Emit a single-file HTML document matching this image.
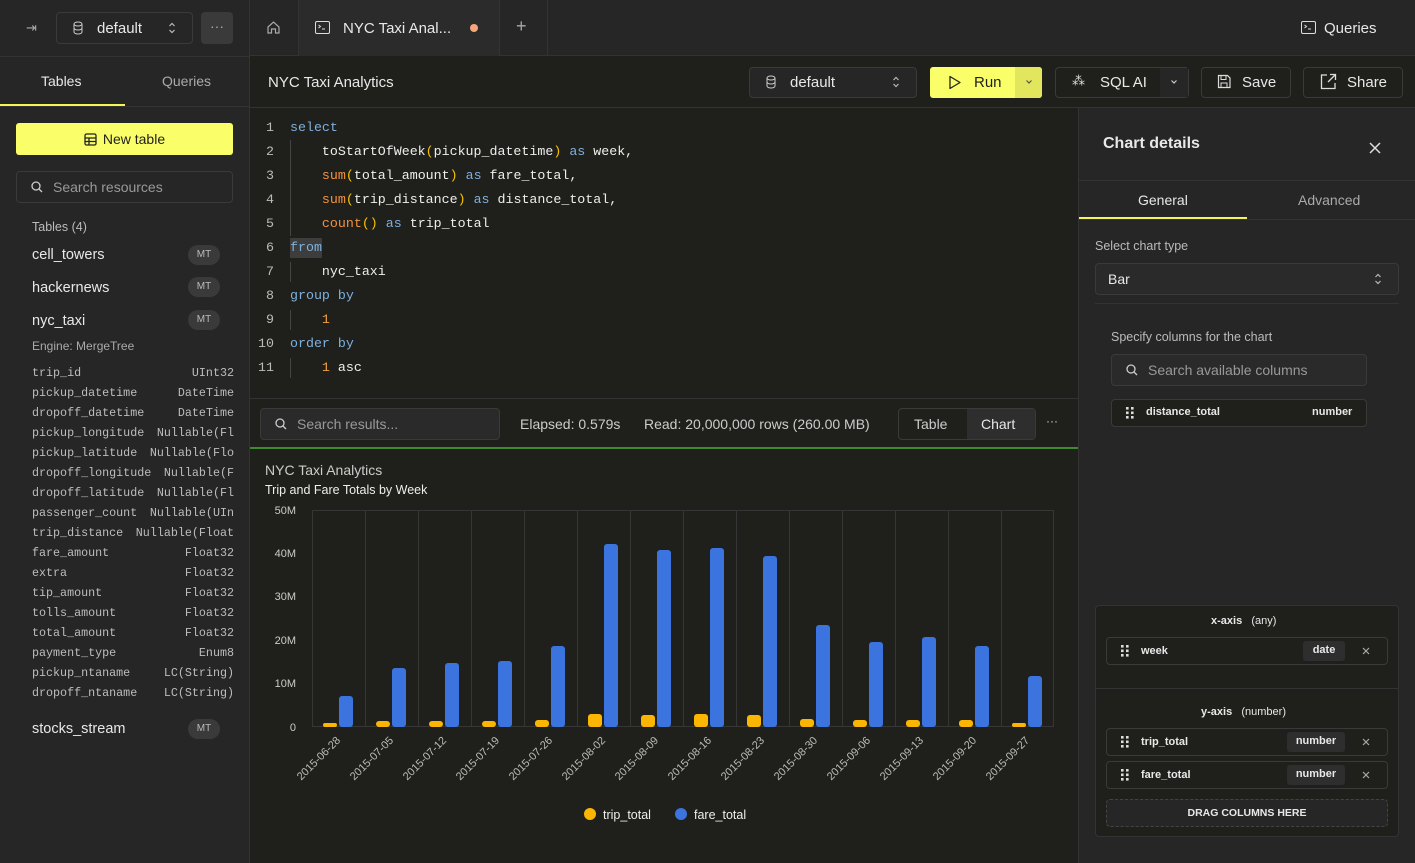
<!DOCTYPE html>
<html><head><meta charset="utf-8"><style>
*{box-sizing:border-box;margin:0;padding:0}
body{width:1415px;height:863px;background:#1f1f1c;font-family:"Liberation Sans",sans-serif;color:#e8e8e8;position:relative;overflow:hidden;font-size:14px}
.a{position:absolute}
.mono{font-family:"Liberation Mono","DejaVu Sans Mono",monospace}
.side{left:0;top:0;width:250px;height:863px;background:#262626;border-right:1px solid #333}
.btn{border:1px solid #3a3a3a;border-radius:4px;background:#1f1f1c}
.badge{background:#3a3a3a;border-radius:10px;color:#bbb;font-size:10px;width:32px;height:20px;line-height:20px;text-align:center}
.col{left:32px;width:202px;font-size:11.7px;color:#bdbdbd;height:20px;line-height:20px;display:flex;justify-content:space-between}
.code{left:290px;font-size:13.3px;color:#eee;height:24px;line-height:24px;white-space:pre}
.ln{left:254px;width:20px;text-align:right;font-size:13.3px;color:#bbb;height:24px;line-height:24px}
.k{color:#7fb0dc}.f{color:#f3923e}.p{color:#f5c400}.n{color:#f3a03e}
.rp{left:1078px;top:108px;width:337px;height:755px;background:#262626;border-left:1px solid #333}
.chip{border:1px solid #3a3a3a;border-radius:4px;background:#1f1f1c;height:28px;font-size:11px;font-weight:bold}
</style></head><body>
<svg width="0" height="0" style="position:absolute"><defs>
<symbol id="ud" viewBox="0 0 8 14"><path d="M1.5 5L4 2.5 6.5 5M1.5 9L4 11.5 6.5 9" fill="none" stroke="#bbb" stroke-width="1.2"/></symbol>
<symbol id="gr" viewBox="0 0 8 12"><g fill="#ddd"><rect x="0" y="0" width="2.6" height="2.6"/><rect x="5" y="0" width="2.6" height="2.6"/><rect x="0" y="4.5" width="2.6" height="2.6"/><rect x="5" y="4.5" width="2.6" height="2.6"/><rect x="0" y="9" width="2.6" height="2.6"/><rect x="5" y="9" width="2.6" height="2.6"/></g></symbol>
<symbol id="dn" viewBox="0 0 8 6"><path d="M1.5 1.5L4 4 6.5 1.5" fill="none" stroke="#555" stroke-width="1.2"/></symbol>
</defs></svg>
<!-- sidebar -->
<div class="a side"></div>
<div class="a" style="left:0;top:56px;width:250px;height:1px;background:#333"></div>
<div class="a" style="left:26px;top:20px;color:#aaa;font-size:13px">⇥</div>
<div class="a btn" style="left:56px;top:12px;width:137px;height:32px;background:#262626"></div>
<svg class="a" style="left:72px;top:21px" width="12" height="14" viewBox="0 0 12 14"><ellipse cx="6" cy="3" rx="4" ry="2" fill="none" stroke="#ccc"/><path d="M2 3v8c0 1.1 1.8 2 4 2s4-.9 4-2V3M2 7c0 1.1 1.8 2 4 2s4-.9 4-2" fill="none" stroke="#ccc"/></svg>
<div class="a" style="left:97px;top:20px;font-size:15px">default</div>
<svg class="a" style="left:168px;top:21px" width="8" height="14"><use href="#ud"/></svg>
<div class="a" style="left:201px;top:12px;width:32px;height:32px;background:#3a3a3a;border-radius:4px;color:#aaa;text-align:center;line-height:28px">···</div>
<div class="a" style="left:41px;top:73px;font-size:14px">Tables</div>
<div class="a" style="left:162px;top:73px;font-size:14px;color:#aaa">Queries</div>
<div class="a" style="left:0;top:104px;width:125px;height:2px;background:#f5f55a"></div>
<div class="a" style="left:0;top:106px;width:250px;height:1px;background:#333"></div>
<div class="a" style="left:16px;top:123px;width:217px;height:32px;background:#faff69;border-radius:3px;color:#1f1f1c;text-align:center;line-height:32px;font-size:14px">
<svg style="vertical-align:-2px;margin-right:6px" width="13" height="13" viewBox="0 0 13 13"><rect x="1" y="1" width="11" height="11" rx="1.5" fill="none" stroke="#222" stroke-width="1.3"/><path d="M1 5h11M1 8.5h11M5 5v7" stroke="#222" stroke-width="1.3"/></svg>New table</div>
<div class="a btn" style="left:16px;top:171px;width:217px;height:32px;background:#262626"></div>
<svg class="a" style="left:31px;top:181px" width="12" height="12"><circle cx="5" cy="5" r="4" fill="none" stroke="#ccc" stroke-width="1.3"/><path d="M8 8l3 3" stroke="#ccc" stroke-width="1.3"/></svg>
<div class="a" style="left:53px;top:179px;color:#999;font-size:14px">Search resources</div>
<div class="a" style="left:32px;top:220px;font-size:12.5px;color:#bbb">Tables (4)</div>
<div class="a" style="left:32px;top:247px;font-size:14.5px">cell_towers</div><div class="a badge" style="left:188px;top:245px">MT</div>
<div class="a" style="left:32px;top:280px;font-size:14.5px">hackernews</div><div class="a badge" style="left:188px;top:277px">MT</div>
<div class="a" style="left:32px;top:313px;font-size:14.5px">nyc_taxi</div><div class="a badge" style="left:188px;top:310px">MT</div>
<div class="a" style="left:32px;top:339px;font-size:12px;color:#aaa">Engine: MergeTree</div>
<div class="a mono col" style="top:363px"><span>trip_id</span><span>UInt32</span></div>
<div class="a mono col" style="top:383px"><span>pickup_datetime</span><span>DateTime</span></div>
<div class="a mono col" style="top:403px"><span>dropoff_datetime</span><span>DateTime</span></div>
<div class="a mono col" style="top:423px"><span>pickup_longitude</span><span>Nullable(Fl</span></div>
<div class="a mono col" style="top:443px"><span>pickup_latitude</span><span>Nullable(Flo</span></div>
<div class="a mono col" style="top:463px"><span>dropoff_longitude</span><span>Nullable(F</span></div>
<div class="a mono col" style="top:483px"><span>dropoff_latitude</span><span>Nullable(Fl</span></div>
<div class="a mono col" style="top:503px"><span>passenger_count</span><span>Nullable(UIn</span></div>
<div class="a mono col" style="top:523px"><span>trip_distance</span><span>Nullable(Float</span></div>
<div class="a mono col" style="top:543px"><span>fare_amount</span><span>Float32</span></div>
<div class="a mono col" style="top:563px"><span>extra</span><span>Float32</span></div>
<div class="a mono col" style="top:583px"><span>tip_amount</span><span>Float32</span></div>
<div class="a mono col" style="top:603px"><span>tolls_amount</span><span>Float32</span></div>
<div class="a mono col" style="top:623px"><span>total_amount</span><span>Float32</span></div>
<div class="a mono col" style="top:643px"><span>payment_type</span><span>Enum8</span></div>
<div class="a mono col" style="top:663px"><span>pickup_ntaname</span><span>LC(String)</span></div>
<div class="a mono col" style="top:683px"><span>dropoff_ntaname</span><span>LC(String)</span></div>
<div class="a" style="left:32px;top:721px;font-size:14.5px">stocks_stream</div><div class="a badge" style="left:188px;top:719px">MT</div>

<!-- top tab bar -->
<div class="a" style="left:250px;top:0;width:1165px;height:56px;background:#262626;border-bottom:1px solid #333"></div>
<div class="a" style="left:298px;top:0;width:1px;height:56px;background:#333"></div>
<svg class="a" style="left:266px;top:20px" width="15" height="15" viewBox="0 0 15 15"><path d="M2 7L7.5 2 13 7V13H9.5V9h-4v4H2z" fill="none" stroke="#aaa" stroke-width="1.2"/></svg>
<div class="a" style="left:299px;top:0;width:200px;height:56px;background:#2b2b2b"></div>
<svg class="a" style="left:315px;top:21px" width="15" height="13"><rect x=".5" y=".5" width="14" height="12" rx="1.5" fill="none" stroke="#ddd"/><path d="M3.5 4l2 1.5-2 1.5M7 8h3" fill="none" stroke="#ddd"/></svg>
<div class="a" style="left:343px;top:20px;font-size:15px">NYC Taxi Anal...</div>
<div class="a" style="left:470px;top:24px;width:8px;height:8px;border-radius:50%;background:#f6a57a"></div>
<div class="a" style="left:499px;top:0;width:1px;height:56px;background:#333"></div>
<div class="a" style="left:516px;top:16px;font-size:18px;color:#aaa">+</div>
<div class="a" style="left:547px;top:0;width:1px;height:56px;background:#333"></div>
<svg class="a" style="left:1301px;top:21px" width="15" height="13"><rect x=".5" y=".5" width="14" height="12" rx="1.5" fill="none" stroke="#ddd"/><path d="M3.5 4l2 1.5-2 1.5M7 8h3" fill="none" stroke="#ddd"/></svg>
<div class="a" style="left:1324px;top:20px;font-size:15px">Queries</div>

<!-- toolbar -->
<div class="a" style="left:250px;top:107px;width:1165px;height:1px;background:#333"></div>
<div class="a" style="left:268px;top:74px;font-size:15px">NYC Taxi Analytics</div>
<div class="a btn" style="left:749px;top:67px;width:168px;height:31px;background:#262626"></div>
<svg class="a" style="left:765px;top:75px" width="12" height="14" viewBox="0 0 12 14"><ellipse cx="6" cy="3" rx="4" ry="2" fill="none" stroke="#ccc"/><path d="M2 3v8c0 1.1 1.8 2 4 2s4-.9 4-2V3M2 7c0 1.1 1.8 2 4 2s4-.9 4-2" fill="none" stroke="#ccc"/></svg>
<div class="a" style="left:790px;top:74px;font-size:15px">default</div>
<svg class="a" style="left:892px;top:75px" width="8" height="14"><use href="#ud"/></svg>
<div class="a" style="left:930px;top:67px;width:112px;height:31px;background:#faff69;border-radius:3px"></div>
<div class="a" style="left:1015px;top:67px;width:27px;height:31px;background:#e2e65c;border-radius:0 3px 3px 0"></div>
<svg class="a" style="left:1025px;top:79px" width="8" height="6"><use href="#dn"/></svg>
<svg class="a" style="left:948px;top:75px" width="13" height="15"><path d="M2 1.5v12l10-6z" fill="none" stroke="#222" stroke-width="1.3" stroke-linejoin="round"/></svg>
<div class="a" style="left:974px;top:74px;font-size:15px;color:#1f1f1c">Run</div>
<div class="a btn" style="left:1055px;top:67px;width:134px;height:31px"></div>
<div class="a" style="left:1160px;top:68px;width:28px;height:29px;background:#262626"></div>
<svg class="a" style="left:1170px;top:79px" width="8" height="6"><path d="M1.5 1.5L4 4 6.5 1.5" fill="none" stroke="#ccc" stroke-width="1.2"/></svg>
<div class="a" style="left:1072px;top:73px;font-size:13px;color:#ddd">⁂</div>
<div class="a" style="left:1100px;top:74px;font-size:15px">SQL AI</div>
<div class="a btn" style="left:1201px;top:67px;width:90px;height:31px"></div>
<svg class="a" style="left:1217px;top:74px" width="14" height="15"><path d="M1.5 1.5h9l2.5 2.5v9.5h-11.5z" fill="none" stroke="#ddd" stroke-width="1.2"/><rect x="4" y="1.5" width="5" height="4" fill="none" stroke="#ddd"/><rect x="4" y="9" width="6" height="4.5" fill="none" stroke="#ddd"/></svg>
<div class="a" style="left:1242px;top:74px;font-size:15px">Save</div>
<div class="a btn" style="left:1303px;top:67px;width:100px;height:31px"></div>
<svg class="a" style="left:1320px;top:73px" width="17" height="17"><path d="M7 2H1.5v13.5H15V10M10 1.5h5.5V7M15.5 1.5L8 9" fill="none" stroke="#ddd" stroke-width="1.3"/></svg>
<div class="a" style="left:1347px;top:74px;font-size:15px">Share</div>

<!-- code -->
<div class="a ln mono" style="top:116px">1</div><div class="a ln mono" style="top:140px">2</div><div class="a ln mono" style="top:164px">3</div><div class="a ln mono" style="top:188px">4</div><div class="a ln mono" style="top:212px">5</div><div class="a ln mono" style="top:236px">6</div><div class="a ln mono" style="top:260px">7</div><div class="a ln mono" style="top:284px">8</div><div class="a ln mono" style="top:308px">9</div><div class="a ln mono" style="top:332px">10</div><div class="a ln mono" style="top:356px">11</div>
<div class="a" style="left:290px;top:140px;width:1px;height:96px;background:#444"></div>
<div class="a" style="left:290px;top:238px;width:32px;height:20px;background:#3d3d3d"></div>
<div class="a" style="left:290px;top:262px;width:1px;height:20px;background:#444"></div>
<div class="a" style="left:290px;top:310px;width:1px;height:20px;background:#444"></div>
<div class="a" style="left:290px;top:358px;width:1px;height:20px;background:#444"></div>
<div class="a code mono" style="top:116px"><span class="k">select</span></div>
<div class="a code mono" style="top:140px">    toStartOfWeek<span class="p">(</span>pickup_datetime<span class="p">)</span> <span class="k">as</span> week,</div>
<div class="a code mono" style="top:164px">    <span class="f">sum</span><span class="p">(</span>total_amount<span class="p">)</span> <span class="k">as</span> fare_total,</div>
<div class="a code mono" style="top:188px">    <span class="f">sum</span><span class="p">(</span>trip_distance<span class="p">)</span> <span class="k">as</span> distance_total,</div>
<div class="a code mono" style="top:212px">    <span class="f">count</span><span class="p">()</span> <span class="k">as</span> trip_total</div>
<div class="a code mono" style="top:236px"><span class="k">from</span></div>
<div class="a code mono" style="top:260px">    nyc_taxi</div>
<div class="a code mono" style="top:284px"><span class="k">group by</span></div>
<div class="a code mono" style="top:308px">    <span class="n">1</span></div>
<div class="a code mono" style="top:332px"><span class="k">order by</span></div>
<div class="a code mono" style="top:356px">    <span class="n">1</span> asc</div>

<!-- results bar -->
<div class="a" style="left:250px;top:398px;width:828px;height:1px;background:#333"></div>
<div class="a btn" style="left:260px;top:408px;width:240px;height:32px;background:#2a2a2a"></div>
<svg class="a" style="left:275px;top:418px" width="12" height="12"><circle cx="5" cy="5" r="4" fill="none" stroke="#ccc" stroke-width="1.3"/><path d="M8 8l3 3" stroke="#ccc" stroke-width="1.3"/></svg>
<div class="a" style="left:297px;top:416px;color:#999;font-size:14px">Search results...</div>
<div class="a" style="left:520px;top:416px;color:#ccc;font-size:14px">Elapsed: 0.579s</div>
<div class="a" style="left:644px;top:416px;color:#ccc;font-size:14px">Read: 20,000,000 rows (260.00 MB)</div>
<div class="a btn" style="left:898px;top:408px;width:138px;height:32px"></div>
<div class="a" style="left:967px;top:409px;width:68px;height:30px;background:#2e2e2e"></div>
<div class="a" style="left:914px;top:416px;font-size:14px;color:#ccc">Table</div>
<div class="a" style="left:981px;top:416px;font-size:14px">Chart</div>
<div class="a" style="left:1046px;top:414px;font-size:12px;color:#ccc">···</div>
<div class="a" style="left:250px;top:447px;width:828px;height:2px;background:#3f8a2a"></div>

<!-- chart -->
<div class="a" style="left:265px;top:462px;font-size:14px;color:#ccc">NYC Taxi Analytics</div>
<div class="a" style="left:265px;top:483px;font-size:12.5px;color:#eee">Trip and Fare Totals by Week</div>
<svg class="a" style="left:0;top:0" width="1078" height="863">
<g fill="#ccc" font-family="Liberation Sans" font-size="11" text-anchor="end">
<text x="296" y="514">50M</text><text x="296" y="557">40M</text><text x="296" y="600">30M</text><text x="296" y="644">20M</text><text x="296" y="687">10M</text><text x="296" y="731">0</text></g>
<g stroke="#363636" stroke-width="1">
<rect x="312.5" y="510.5" width="741" height="216" fill="none"/>
<path d="M365.5 510v216M418.5 510v216M471.5 510v216M524.5 510v216M577.5 510v216M630.5 510v216M683.5 510v216M736.5 510v216M789.5 510v216M842.5 510v216M895.5 510v216M948.5 510v216M1001.5 510v216"/></g>
<g fill="#3b74de">
<rect x="339" y="696" width="14" height="31" rx="3"/><rect x="392" y="668" width="14" height="59" rx="3"/><rect x="445" y="663" width="14" height="64" rx="3"/><rect x="498" y="661" width="14" height="66" rx="3"/><rect x="551" y="646" width="14" height="81" rx="3"/><rect x="604" y="544" width="14" height="183" rx="3"/><rect x="657" y="550" width="14" height="177" rx="3"/><rect x="710" y="548" width="14" height="179" rx="3"/><rect x="763" y="556" width="14" height="171" rx="3"/><rect x="816" y="625" width="14" height="102" rx="3"/><rect x="869" y="642" width="14" height="85" rx="3"/><rect x="922" y="637" width="14" height="90" rx="3"/><rect x="975" y="646" width="14" height="81" rx="3"/><rect x="1028" y="676" width="14" height="51" rx="3"/></g>
<g fill="#fbb604">
<rect x="323" y="723" width="14" height="4" rx="2"/><rect x="376" y="721" width="14" height="6" rx="3"/><rect x="429" y="721" width="14" height="6" rx="3"/><rect x="482" y="721" width="14" height="6" rx="3"/><rect x="535" y="720" width="14" height="7" rx="3"/><rect x="588" y="714" width="14" height="13" rx="3"/><rect x="641" y="715" width="14" height="12" rx="3"/><rect x="694" y="714" width="14" height="13" rx="3"/><rect x="747" y="715" width="14" height="12" rx="3"/><rect x="800" y="719" width="14" height="8" rx="3"/><rect x="853" y="720" width="14" height="7" rx="3"/><rect x="906" y="720" width="14" height="7" rx="3"/><rect x="959" y="720" width="14" height="7" rx="3"/><rect x="1012" y="723" width="14" height="4" rx="2"/></g>
<g fill="#bbb" font-family="Liberation Sans" font-size="11" text-anchor="end">
<text transform="translate(341,741) rotate(-45)">2015-06-28</text><text transform="translate(394,741) rotate(-45)">2015-07-05</text><text transform="translate(447,741) rotate(-45)">2015-07-12</text><text transform="translate(500,741) rotate(-45)">2015-07-19</text><text transform="translate(553,741) rotate(-45)">2015-07-26</text><text transform="translate(606,741) rotate(-45)">2015-08-02</text><text transform="translate(659,741) rotate(-45)">2015-08-09</text><text transform="translate(712,741) rotate(-45)">2015-08-16</text><text transform="translate(765,741) rotate(-45)">2015-08-23</text><text transform="translate(818,741) rotate(-45)">2015-08-30</text><text transform="translate(871,741) rotate(-45)">2015-09-06</text><text transform="translate(924,741) rotate(-45)">2015-09-13</text><text transform="translate(977,741) rotate(-45)">2015-09-20</text><text transform="translate(1030,741) rotate(-45)">2015-09-27</text></g>
<circle cx="590" cy="814" r="6" fill="#fbb604"/><text x="603" y="819" fill="#eee" font-family="Liberation Sans" font-size="12.5">trip_total</text>
<circle cx="681" cy="814" r="6" fill="#3b74de"/><text x="694" y="819" fill="#eee" font-family="Liberation Sans" font-size="12.5">fare_total</text>
</svg>

<!-- right panel -->
<div class="a rp"></div>
<div class="a" style="left:1103px;top:135px;font-size:16px;font-weight:bold">Chart details</div>
<svg class="a" style="left:1369px;top:142px" width="12" height="12"><path d="M1 1l10 10M11 1L1 11" stroke="#ddd" stroke-width="1.5"/></svg>
<div class="a" style="left:1079px;top:180px;width:336px;height:1px;background:#333"></div>
<div class="a" style="left:1138px;top:192px;font-size:14px">General</div>
<div class="a" style="left:1298px;top:192px;font-size:14px;color:#aaa">Advanced</div>
<div class="a" style="left:1079px;top:217px;width:168px;height:2px;background:#f5f55a"></div>
<div class="a" style="left:1079px;top:219px;width:336px;height:1px;background:#333"></div>
<div class="a" style="left:1095px;top:239px;font-size:12.5px;color:#bbb">Select chart type</div>
<div class="a btn" style="left:1095px;top:263px;width:304px;height:32px;background:#2a2a2a"></div>
<div class="a" style="left:1108px;top:271px;font-size:14px">Bar</div>
<svg class="a" style="left:1374px;top:272px" width="8" height="14"><use href="#ud"/></svg>
<div class="a" style="left:1095px;top:303px;width:304px;height:1px;background:#333"></div>
<div class="a" style="left:1111px;top:330px;font-size:12.5px;color:#bbb">Specify columns for the chart</div>
<div class="a btn" style="left:1111px;top:354px;width:256px;height:32px;background:#2a2a2a"></div>
<svg class="a" style="left:1126px;top:364px" width="12" height="12"><circle cx="5" cy="5" r="4" fill="none" stroke="#ccc" stroke-width="1.3"/><path d="M8 8l3 3" stroke="#ccc" stroke-width="1.3"/></svg>
<div class="a" style="left:1148px;top:362px;color:#999;font-size:14px">Search available columns</div>
<div class="a chip" style="left:1111px;top:399px;width:256px;height:28px"></div>
<svg class="a" style="left:1126px;top:407px" width="8" height="12"><use href="#gr"/></svg>
<div class="a" style="left:1146px;top:406px;font-size:11px;font-weight:bold">distance_total</div>
<div class="a" style="left:1312px;top:406px;font-size:11px;font-weight:bold">number</div>

<div class="a" style="left:1095px;top:605px;width:304px;height:232px;background:#1f1f1c;border:1px solid #333;border-radius:4px"></div>
<div class="a" style="left:1211px;top:615px;font-size:11px;font-weight:bold">x-axis &nbsp; <span style="font-weight:normal">(any)</span></div>
<div class="a chip" style="left:1106px;top:637px;width:282px;height:28px"></div>
<svg class="a" style="left:1121px;top:645px" width="8" height="12"><use href="#gr"/></svg>
<div class="a" style="left:1141px;top:645px;font-size:11px;font-weight:bold">week</div>
<div class="a" style="left:1303px;top:641px;width:42px;height:20px;background:#2e2e2e;border-radius:3px;font-size:11px;font-weight:bold;text-align:center;line-height:19px">date</div>
<svg class="a" style="left:1362px;top:647px" width="8" height="8"><path d="M1 1l6 6M7 1L1 7" stroke="#aaa" stroke-width="1.2"/></svg>
<div class="a" style="left:1096px;top:688px;width:302px;height:1px;background:#333"></div>
<div class="a" style="left:1201px;top:706px;font-size:11px;font-weight:bold">y-axis &nbsp; <span style="font-weight:normal">(number)</span></div>
<div class="a chip" style="left:1106px;top:728px;width:282px;height:28px"></div>
<svg class="a" style="left:1121px;top:736px" width="8" height="12"><use href="#gr"/></svg>
<div class="a" style="left:1141px;top:736px;font-size:11px;font-weight:bold">trip_total</div>
<div class="a" style="left:1287px;top:732px;width:58px;height:20px;background:#2e2e2e;border-radius:3px;font-size:11px;font-weight:bold;text-align:center;line-height:19px">number</div>
<svg class="a" style="left:1362px;top:738px" width="8" height="8"><path d="M1 1l6 6M7 1L1 7" stroke="#aaa" stroke-width="1.2"/></svg>
<div class="a chip" style="left:1106px;top:761px;width:282px;height:28px"></div>
<svg class="a" style="left:1121px;top:769px" width="8" height="12"><use href="#gr"/></svg>
<div class="a" style="left:1141px;top:769px;font-size:11px;font-weight:bold">fare_total</div>
<div class="a" style="left:1287px;top:765px;width:58px;height:20px;background:#2e2e2e;border-radius:3px;font-size:11px;font-weight:bold;text-align:center;line-height:19px">number</div>
<svg class="a" style="left:1362px;top:771px" width="8" height="8"><path d="M1 1l6 6M7 1L1 7" stroke="#aaa" stroke-width="1.2"/></svg>
<div class="a" style="left:1106px;top:799px;width:282px;height:28px;border:1px dashed #444;border-radius:4px;background:#262626;font-size:10.5px;font-weight:bold;text-align:center;line-height:26px">DRAG COLUMNS HERE</div>
</body></html>
